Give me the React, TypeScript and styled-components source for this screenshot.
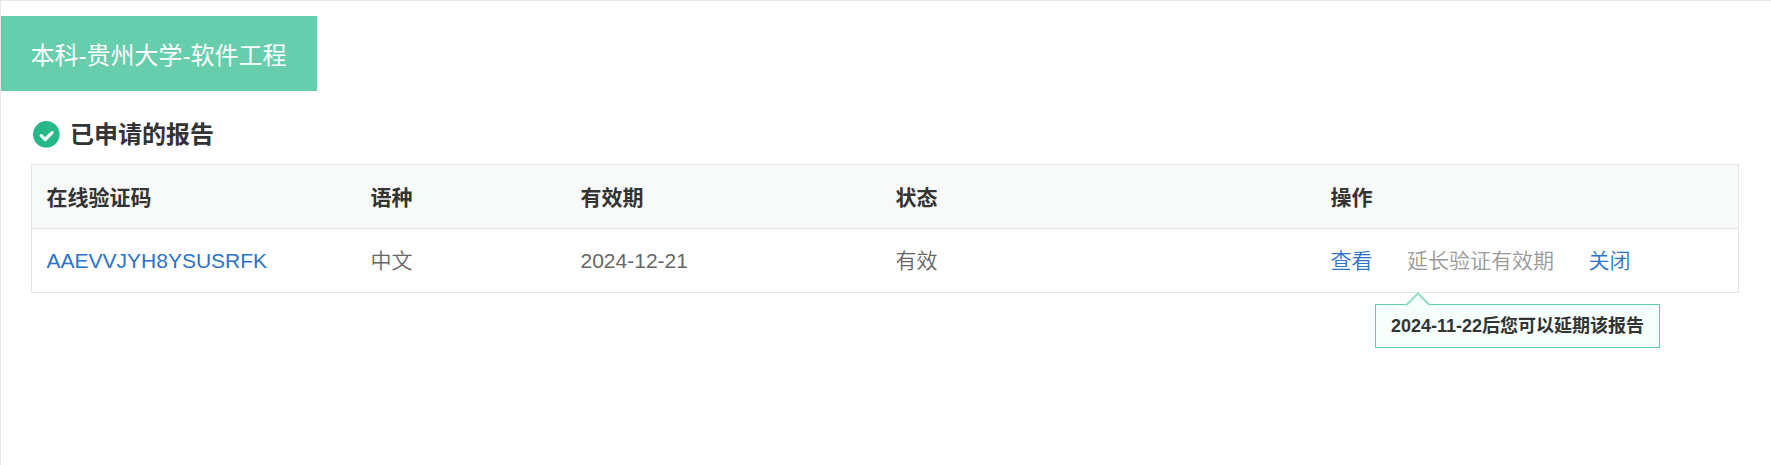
import React from "react";
import styled, { createGlobalStyle } from "styled-components";

const GlobalStyle = createGlobalStyle`
  * { box-sizing: border-box; }
  body {
    margin: 0;
    background: #fff;
    color: #333;
    font-family: "Liberation Sans", "Noto Sans CJK SC", sans-serif;
  }
`;

const Panel = styled.main`
  height: 465px;
  padding-top: 15px;
  overflow: hidden;
  border-top: 1px solid #e6eaea;
  border-left: 1px solid #e6e6e6;
`;

const EducationTab = styled.div`
  width: 316px;
  height: 75px;
  padding: 0 29.5px;
  background: #66ceac;
  color: #fff;
  font-size: 24px;
  line-height: 79px;
  white-space: nowrap;
`;

const Section = styled.section`
  padding: 0 32px 0 30px;
`;

const SectionTitle = styled.h2`
  display: flex;
  align-items: center;
  gap: 10px;
  height: 73px;
  margin: 0;
  padding: 14px 0 0 2px;
  font-size: 24px;
  line-height: 36px;
`;

const Table = styled.div`
  width: 1708px;
  border: 1px solid #e3e4e4;
`;

const Row = styled.div<{ $head?: boolean }>`
  display: grid;
  grid-template-columns: 324px 210px 315px 435px 1fr;
  align-items: center;
  height: ${(p) => (p.$head ? 64 : 63)}px;
  padding: ${(p) => (p.$head ? 2 : 0)}px 0 0 14.5px;
  font-size: 21px;
  line-height: 30px;
  color: ${(p) => (p.$head ? "#333" : "#666")};
  background: ${(p) => (p.$head ? "#f8faf9" : "#fff")};
  font-weight: ${(p) => (p.$head ? 700 : 350)};
  border-bottom: ${(p) => (p.$head ? "1px solid #e3e4e4" : "0")};
`;

const Cell = styled.div`
  white-space: nowrap;
`;

const Link = styled.a`
  color: #2a73c8;
  text-decoration: none;
`;

const Actions = styled.div`
  display: flex;
  gap: 34.5px;
  white-space: nowrap;
`;

const Extend = styled.span`
  position: relative;
  color: #999;
`;

const Tooltip = styled.div`
  position: absolute;
  top: 58px;
  left: -32px;
  width: 285px;
  height: 44px;
  border: 1px solid #5fcfab;
  background: #f6fffc;
  color: #333;
  font-size: 18px;
  font-weight: 700;
  line-height: 43px;
  text-align: center;
`;

const Arrow = styled.svg`
  position: absolute;
  top: -14px;
  left: 29px;
`;

const CheckIcon = () => (
  <svg width="27" height="27" viewBox="0 0 27 27">
    <circle cx="13.3" cy="13.3" r="13.3" fill="#26b887" />
    <path d="M8.2 14.6l4 3.9 6.9-6.8" fill="none" stroke="#fff" strokeWidth="3.2" strokeLinecap="round" strokeLinejoin="round" />
  </svg>
);

export default function App() {
  return (
    <>
      <GlobalStyle />
      <Panel>
        <EducationTab>本科-贵州大学-软件工程</EducationTab>
        <Section>
          <SectionTitle>
            <CheckIcon />
            已申请的报告
          </SectionTitle>
          <Table>
            <Row $head>
              {["在线验证码", "语种", "有效期", "状态", "操作"].map((name) => (
                <Cell key={name}>{name}</Cell>
              ))}
            </Row>
            <Row>
              <Cell><Link>AAEVVJYH8YSUSRFK</Link></Cell>
              <Cell>中文</Cell>
              <Cell>2024-12-21</Cell>
              <Cell>有效</Cell>
              <Actions>
                <Link>查看</Link>
                <Extend>
                  延长验证有效期
                  <Tooltip>
                    <Arrow width="26" height="16" viewBox="0 0 26 16">
                      <path d="M1.5 14L13 2.5 24.5 14V16h-23z" fill="#f6fffc" />
                      <path d="M1.5 14L13 2.5 24.5 14" fill="none" stroke="#8be0c6" strokeWidth="2" />
                    </Arrow>
                    2024-11-22后您可以延期该报告
                  </Tooltip>
                </Extend>
                <Link>关闭</Link>
              </Actions>
            </Row>
          </Table>
        </Section>
      </Panel>
    </>
  );
}
